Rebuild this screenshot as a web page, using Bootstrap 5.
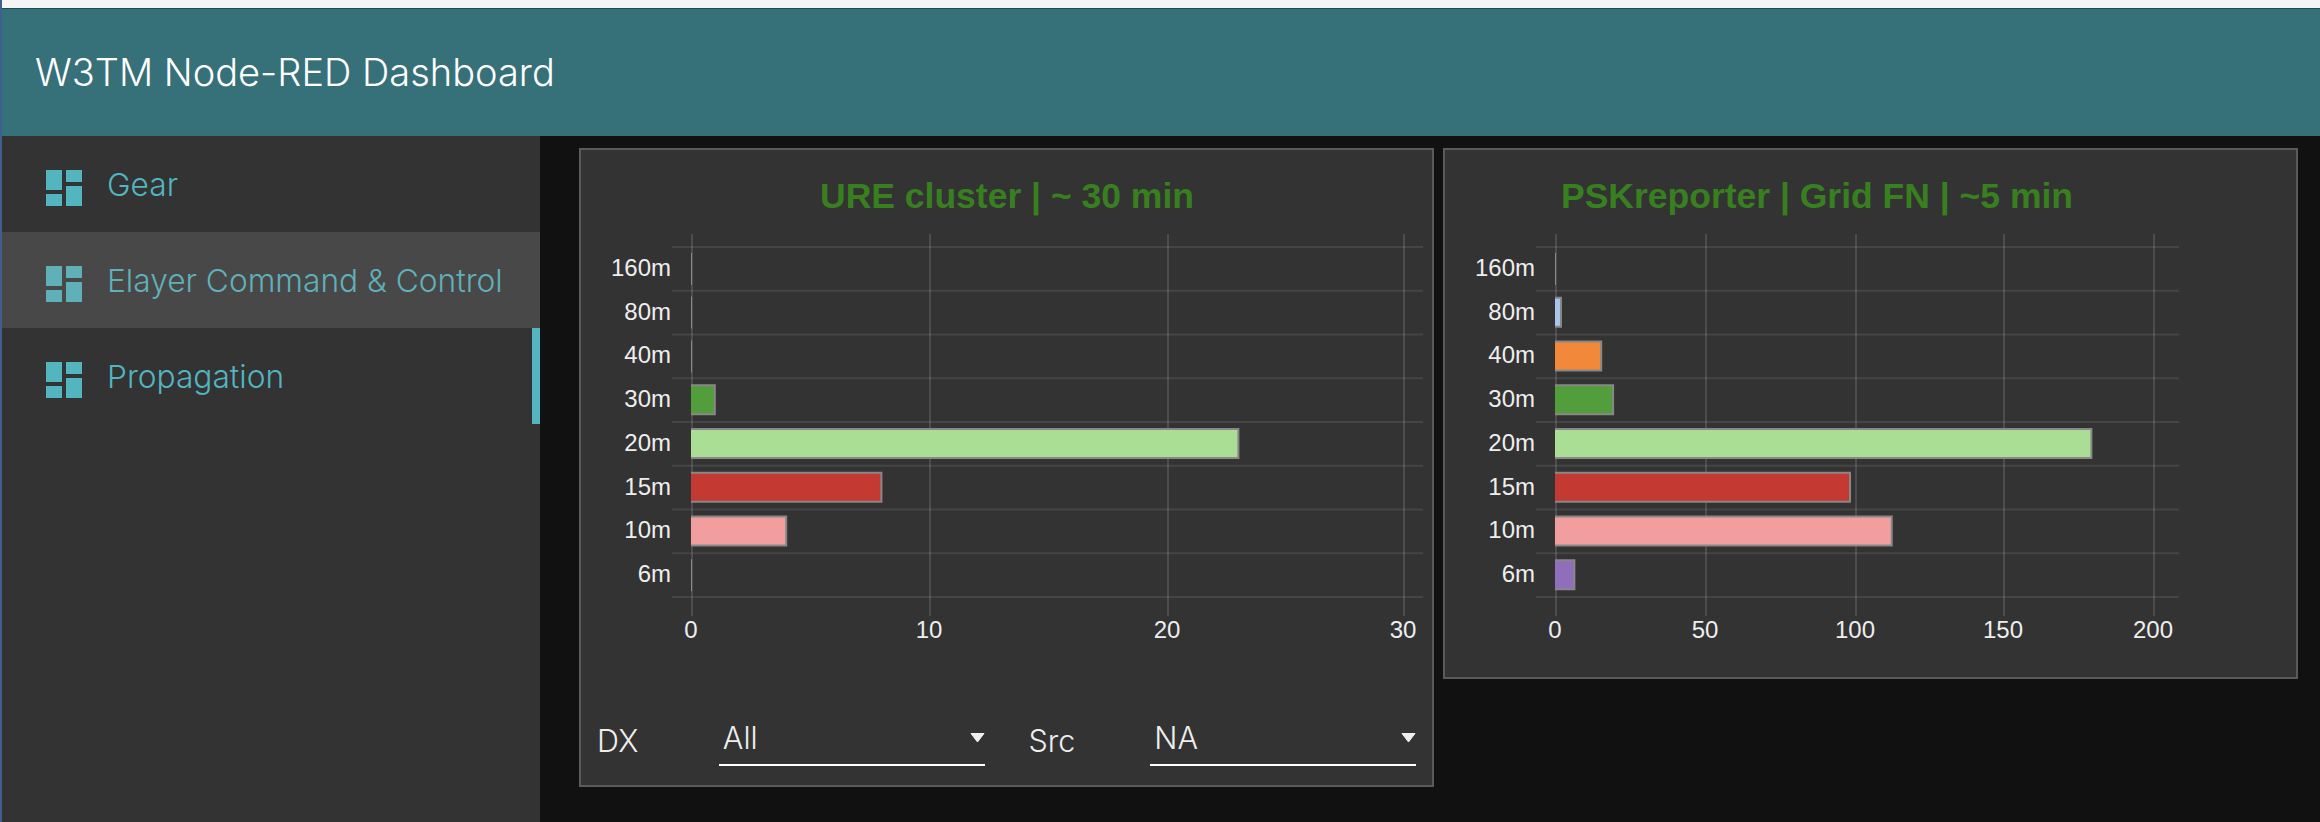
<!DOCTYPE html>
<html lang="en">

<head>
    <meta charset="UTF-8" />
    <title>W3TM Node-RED Dashboard</title>
    <link rel="stylesheet" href="https://cdn.jsdelivr.net/npm/bootstrap@5.3.0/dist/css/bootstrap.min.css">
    <style>
        html,
        body {
            height: 100%;
        }

        body {
            background: #111;
            font-family: Inter, Roboto, "Liberation Sans", sans-serif;
            overflow: hidden;
        }

        .page-wrap {
            height: 100%;
            border-left: 2px solid #3f5f8f;
        }

        .top-strip {
            height: 9px;
            background: #f5f5f5;
            border-bottom: 1px solid #1c4a57;
        }

        .dash-bar {
            height: 127px;
            background: #367079;
            padding: 0 0 0 33px;
        }

        .dash-bar .navbar-brand {
            font-size: 38px;
            font-weight: 300;
            color: #fff;
            margin: 0;
            padding: 0;
        }

        .side-nav {
            width: 538px;
            background: #333;
        }

        .side-link {
            height: 96px;
            padding: 2px 0 0 44px;
            gap: 25px;
            color: #52b5c0;
            font-size: 31.7px;
            font-weight: 300;
            text-decoration: none;
        }

        .side-link:hover {
            color: #52b5c0;
        }

        .side-link.hovered {
            background: #484848;
            color: #60b0b8;
        }

        .side-link.current {
            border-right: 8px solid #52b5c0;
        }

        .side-icon {
            width: 36px;
            height: 36px;
            margin-top: 6px;
            fill: currentColor;
        }

        .dash-main {
            padding: 12px 0 0 39px;
            gap: 9px;
        }

        .dash-panel {
            background: #333;
            border: 2px solid #5a5a5a;
        }

        .panel-wide {
            width: 855px;
            height: 639px;
        }

        .panel-short {
            width: 855px;
            height: 531px;
        }

        .chart-svg {
            display: block;
        }

        .chart-svg text {
            font-family: "Liberation Sans", Arial, sans-serif;
        }

        .chart-title {
            font-size: 35.5px;
            font-weight: 700;
            fill: #38801f;
            text-anchor: middle;
        }

        .chart-tick {
            font-size: 24px;
            fill: #eee;
        }

        .select-row {
            padding: 0 16px;
            color: #eee;
            font-size: 30.5px;
            font-weight: 300;
        }

        .select-label {
            width: 122px;
            line-height: 55px;
        }

        .select-label-src {
            width: 122px;
            margin-left: 44px;
            line-height: 55px;
        }

        .select-box {
            width: 266px;
            height: 53px;
            padding: 0 0 2px 4px;
            border-bottom: 2px solid #fff;
        }

        .select-arrow {
            width: 15px;
            height: 9px;
            fill: #eee;
        }
    </style>
</head>

<body>
    <div class="page-wrap d-flex flex-column">
        <div class="top-strip"></div>
        <nav class="navbar dash-bar">
            <span class="navbar-brand">W3TM Node-RED Dashboard</span>
        </nav>
        <div class="d-flex flex-grow-1">
            <div class="side-nav d-flex flex-column">
                <a href="#" class="side-link d-flex align-items-center">
                    <svg class="side-icon" viewBox="0 0 36 36"><path d="M0 0h16v20H0zM0 24h16v12H0zM20 0h16v12H20zM20 16h16v20H20z" /></svg>
                    Gear
                </a>
                <a href="#" class="side-link hovered d-flex align-items-center">
                    <svg class="side-icon" viewBox="0 0 36 36"><path d="M0 0h16v20H0zM0 24h16v12H0zM20 0h16v12H20zM20 16h16v20H20z" /></svg>
                    Elayer Command &amp; Control
                </a>
                <a href="#" class="side-link current d-flex align-items-center">
                    <svg class="side-icon" viewBox="0 0 36 36"><path d="M0 0h16v20H0zM0 24h16v12H0zM20 0h16v12H20zM20 16h16v20H20z" /></svg>
                    Propagation
                </a>
            </div>
            <div class="dash-main d-flex align-items-start flex-grow-1">
                <div class="dash-panel panel-wide d-flex flex-column">
                    <svg id="chartCluster" class="chart-svg" width="851" height="563"></svg>
                    <div class="select-row d-flex align-items-start">
                        <span class="select-label">DX</span>
                        <div class="select-box d-flex justify-content-between align-items-center">
                            <span>All</span>
                            <svg class="select-arrow" viewBox="0 0 15 9"><path d="M1 .5h13L7.5 9z" stroke="#eee" stroke-linejoin="round" /></svg>
                        </div>
                        <span class="select-label-src">Src</span>
                        <div class="select-box d-flex justify-content-between align-items-center">
                            <span>NA</span>
                            <svg class="select-arrow" viewBox="0 0 15 9"><path d="M1 .5h13L7.5 9z" stroke="#eee" stroke-linejoin="round" /></svg>
                        </div>
                    </div>
                </div>
                <div class="dash-panel panel-short">
                    <svg id="chartPsk" class="chart-svg" width="851" height="527"></svg>
                </div>
            </div>
        </div>
    </div>

    <script src="https://cdn.jsdelivr.net/npm/bootstrap@5.3.0/dist/js/bootstrap.bundle.min.js"></script>
    <script>
        const bands = ["160m", "80m", "40m", "30m", "20m", "15m", "10m", "6m"];
        const colors = ["#8a8a8a", "#a9c6ea", "#f2883a", "#529e3c", "#aade94", "#c43a33", "#f29e9e", "#8f6fbb"];
        const gridTop = 97;
        const rowHeight = 43.75;

        function drawChart(id, chart) {
            const right = chart.lineEnd;
            let html = `<text class="chart-title" x="${chart.titleX}" y="${chart.titleY}">${chart.title}</text>`;

            // vertical grid lines and value ticks, [label, offset from zero]
            chart.ticks.forEach(([tick, offset]) => {
                const x = chart.zero + offset;
                html += `<rect x="${x - 1}" y="84" width="2" height="382" fill="#fff" fill-opacity=".13" />`;
                html += `<text class="chart-tick" x="${x - 1}" y="488" text-anchor="middle">${tick}</text>`;
            });

            // horizontal grid lines
            for (let i = 0; i <= bands.length; i++) {
                const y = gridTop + i * rowHeight;
                html += `<rect x="${chart.lineStart}" y="${y - 1}" width="${right - chart.lineStart}" height="2" fill="#fff" fill-opacity=".09" />`;
            }

            bands.forEach((band, i) => {
                const mid = gridTop + (i + 0.5) * rowHeight;
                const w = chart.values[i] * chart.scale;
                html += `<text class="chart-tick" x="${chart.lineStart - 1}" y="${mid + 7}" text-anchor="end">${band}</text>`;
                if (w === 0) {
                    html += `<rect x="${chart.zero - 1}" y="${mid - 16}" width="1" height="32" fill="#8a8a8a" />`;
                } else {
                    // no border on the left edge, like the chart library draws it
                    const x0 = chart.zero - 1;
                    html += `<path d="M${x0} ${mid - 15}H${x0 + w}V${mid + 14}H${x0}" fill="${colors[i]}" stroke="#888" stroke-width="2" />`;
                }
            });

            document.getElementById(id).innerHTML = html;
        }

        drawChart("chartCluster", {
            title: "URE cluster | ~ 30 min",
            titleX: 426,
            titleY: 58,
            zero: 111,
            scale: 23.8,
            lineStart: 91,
            lineEnd: 842,
            ticks: [[0, 0], [10, 238], [20, 476], [30, 712]],
            values: [0, 0, 0, 1, 23, 8, 4, 0],
        });

        drawChart("chartPsk", {
            title: "PSKreporter | Grid FN | ~5 min",
            titleX: 372,
            titleY: 58,
            zero: 111,
            scale: 2.98,
            lineStart: 91,
            lineEnd: 734,
            ticks: [[0, 0], [50, 150], [100, 300], [150, 448], [200, 598]],
            values: [0, 2, 15.5, 19.5, 180, 99, 113, 6.5],
        });
    </script>
</body>

</html>
